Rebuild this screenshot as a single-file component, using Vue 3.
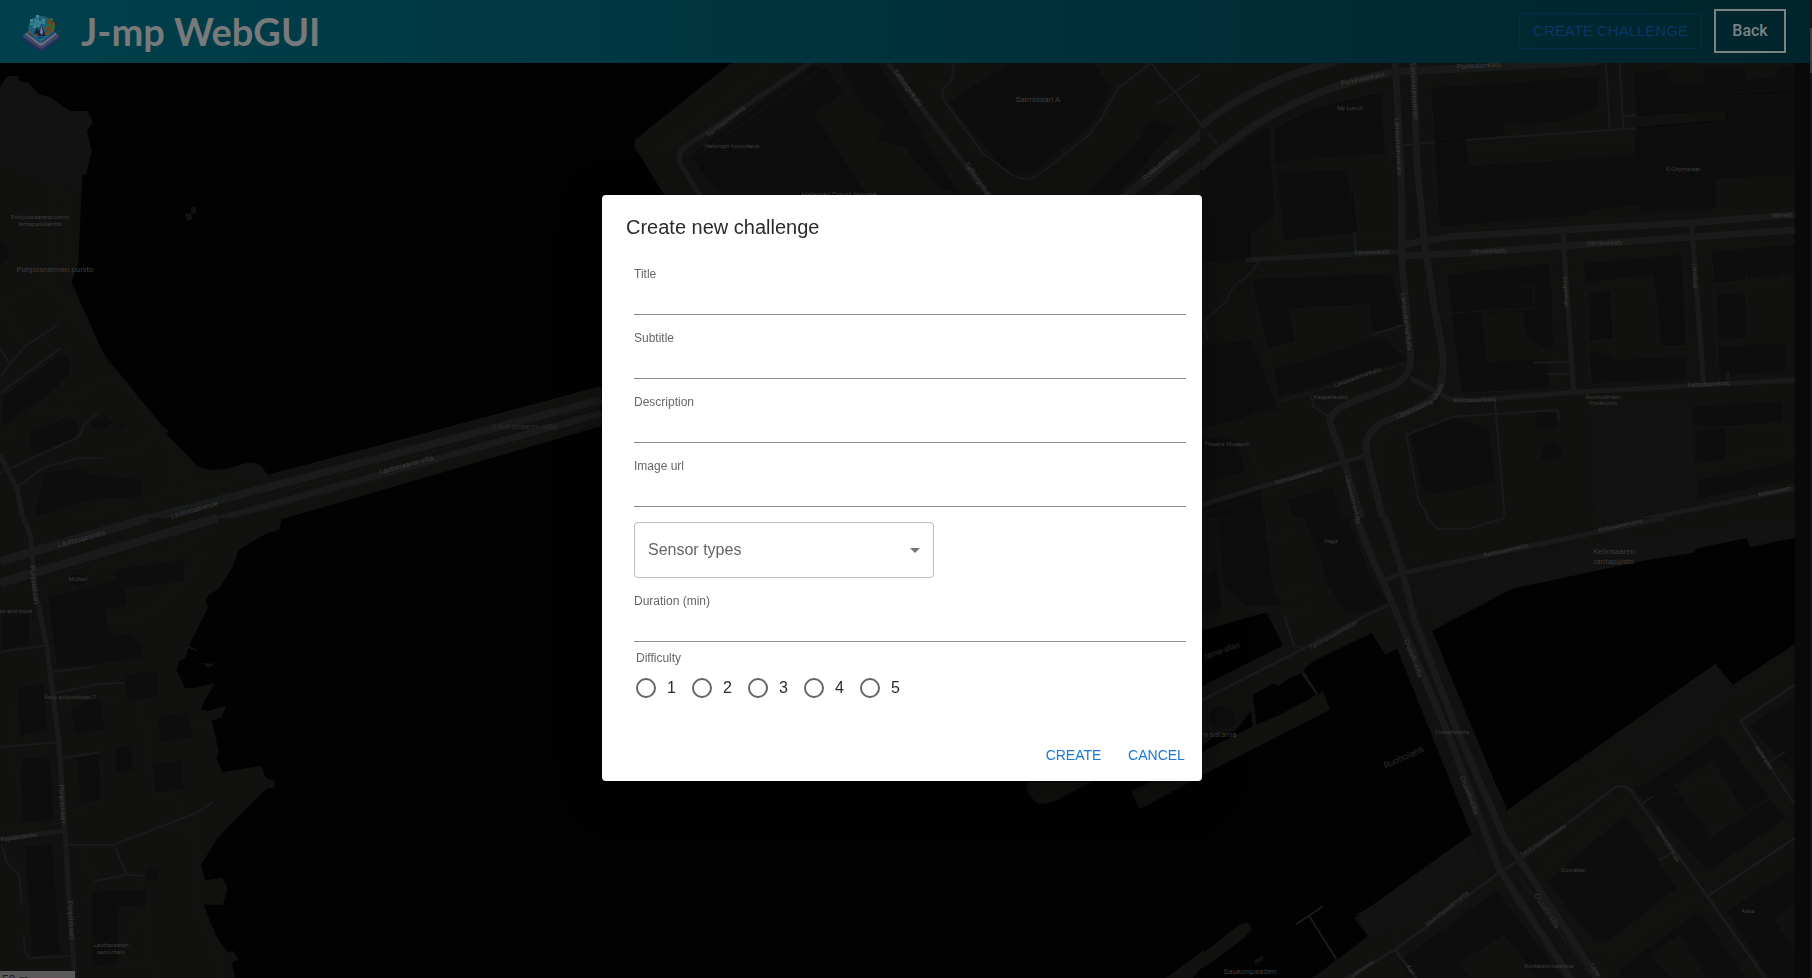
<script setup>
import { reactive } from 'vue'

const form = reactive({
  title: '',
  subtitle: '',
  description: '',
  image: '',
  sensor: '',
  duration: '',
  difficulty: null
})

const textFields = [
  { key: 'title', label: 'Title' },
  { key: 'subtitle', label: 'Subtitle' },
  { key: 'description', label: 'Description' },
  { key: 'image', label: 'Image url' }
]

// Map sections: origin and unit size of each one on the map canvas
const sections = {
  nw: [0, 60, 0.385],
  sw: [0, 518, 0.385],
  n: [600, 60, 0.385],
  ne: [1200, 60, 0.3903],
  se: [1200, 518, 0.3903]
}
const frame = (id) => {
  const [x, y, s] = sections[id]
  return `translate(${x} ${y}) scale(${s} 0.3333)`
}

const labels = [
  ['nw', 104, 477, 0, 'Pohjoiskaarenpuiston', 6],
  ['nw', 104, 499, 0, 'lemapallokenttä', 6],
  ['nw', 144, 636, 0, 'Pohjoisniemen puisto', 8],
  ['nw', 1364, 1108, 0, 'Lauttasaaren silta', 8, 'faint'],
  ['nw', 1058, 1220, -15, 'Lauttasaaren silta', 7],
  ['nw', 506, 1355, -16, 'Lauttasaarentie', 7],
  ['sw', 212, 70, -15, 'Lauttasaarentie', 7],
  ['sw', 84, 200, 84, 'Pohjoiskaari', 7],
  ['sw', 203, 190, 0, 'Mutteri', 6],
  ['sw', 40, 284, 0, 'aw and more', 6],
  ['sw', 183, 544, 0, 'Asoy pohjoiskaari 7', 6],
  ['sw', 156, 858, 87, 'Pohjoiskaari', 7],
  ['sw', 50, 963, -8, 'Pajalahdentie', 6],
  ['sw', 178, 1206, 87, 'Pohjoiskaari', 7],
  ['sw', 289, 1288, 0, 'Lauttasaaren', 6],
  ['sw', 289, 1309, 0, 'senioritalo', 6],
  ['n', 330, 190, -37, 'Salmisaarenranta', 6],
  ['n', 343, 264, 0, 'Helsingin hovioikeus', 6],
  ['n', 622, 410, 0, 'Helsinki Court House', 8],
  ['n', 795, 88, 54, 'Tallberginkatu', 7],
  ['n', 979, 366, 54, 'Tallberginkatu', 7],
  ['n', 1137, 126, 0, 'Salmisaari A', 8],
  ['n', 1460, 318, -41, 'Porkkalankatu', 7],
  ['ne', 418, 63, -13, 'Porkkalankatu', 7],
  ['ne', 715, 24, -3, 'Porkkalankatu', 7],
  ['ne', 385, 149, 0, 'My Lunch', 6],
  ['ne', 542, 96, 87, 'Länsisatamankatu', 7],
  ['ne', 502, 262, 87, 'Länsisatamankatu', 7],
  ['ne', 522, 786, 83, 'Länsisatamankatu', 7],
  ['ne', 1237, 332, 0, 'K-Citymarket', 6],
  ['ne', 440, 582, -2, 'Itämerenkatu', 6],
  ['ne', 740, 579, -2, 'Itämerenkatu', 6],
  ['ne', 1038, 555, -2, 'Itämerenkatu', 6],
  ['ne', 1490, 471, -2, 'Itämere', 6],
  ['ne', 932, 696, 87, 'Kaapelikuja', 6],
  ['ne', 1262, 648, 87, 'Laivakuja', 6],
  ['ne', 406, 958, -20, 'Länsisatamankatu', 6],
  ['ne', 335, 1016, 0, 'Kaapeliaukio', 6],
  ['ne', 550, 1052, -23, 'Länsisatama', 7],
  ['ne', 616, 1000, -62, 'nkatu', 7],
  ['ne', 705, 1026, -2, 'Kellosaarenkatu', 6],
  ['ne', 1304, 979, -3, 'Kellosaarenkatu', 6],
  ['ne', 1033, 1016, 0, 'Ruoholahden', 6],
  ['ne', 1033, 1036, 0, 'Pysäköinti', 6],
  ['ne', 68, 1158, 0, 'Theatre Museum', 6],
  ['ne', 253, 1254, -16, 'Tammasaarenkatu', 6],
  ['ne', 388, 1320, 76, 'Länsisatamankatu', 6],
  ['ne', 1474, 1300, -12, 'Kellosaarenr', 6],
  ['se', 336, 75, 0, 'Vega', 6],
  ['se', 785, 102, -13, 'Kellosaarenranta', 6],
  ['se', 1079, 26, -12, 'Kellosaarenranta', 6],
  ['se', 1061, 107, 0, 'Kellosaaren', 8],
  ['se', 1061, 137, 0, 'rantapuisto', 8],
  ['se', 343, 358, -29, 'Tammasaarenlaituri', 6],
  ['se', 60, 405, -20, 'tama-allas', 8, 'faint'],
  ['se', 50, 657, 0, 'n satama', 8],
  ['se', 540, 424, 69, 'Crusellinsilta', 7],
  ['se', 645, 648, 0, 'Crusellinsilta', 6],
  ['se', 526, 725, -24, 'Ruoholahti', 9, 'faint'],
  ['se', 683, 834, 69, 'Crusellinsilta', 7],
  ['se', 884, 1182, 57, 'Crusellinsilta', 7],
  ['se', 882, 972, -34, 'Saukonpaadenranta', 6],
  ['se', 636, 1176, -38, 'Saukonpaadenranta', 6],
  ['se', 418, 1358, -36, 'adenranta', 6],
  ['se', 536, 1360, 58, 'Karl', 6],
  ['se', 955, 1061, 0, 'Docrates', 6],
  ['se', 1194, 980, 58, 'Messitytönkuja', 6],
  ['se', 1440, 720, 57, 'Jaalaranta', 6],
  ['se', 1405, 1186, 0, 'Aava', 6],
  ['se', 893, 1351, 0, 'Kiinteistömaailma', 6],
  ['se', 1010, 1360, 60, 'Länsi', 6],
  ['se', 127, 1369, 0, 'Saukonpaaden', 8]
].map(([id, x, y, angle, text, size, tone]) => {
  const [ox, oy, s] = sections[id]
  const px = Math.round(ox + x * s)
  const py = Math.round(oy + y / 3)
  return { text, size, tone, px, py, turn: `rotate(${angle} ${px} ${py})` }
})
</script>

<template>
  <div class="page">
    <header class="topbar">
      <svg class="logo" viewBox="0 0 38 38" aria-hidden="true">
        <path d="M1 23 17 12h4l16 11v3L21 37q-2 1.500-4 0L1 26z" fill="#232f58" />
        <path d="M1 21 17 10h4l16 11v2L21 34q-2 1.500-4 0L1 23z" fill="#3d4668" />
        <path d="M3 20 17 10h4l14 10-14 11q-2 1.500-4 0z" fill="#696c7d" />
        <path d="M5 19 17 10h4l12 9-12 9q-2 1.200-4 0z" fill="#123b66" />
        <path d="M6 18Q6 2 19 2t13 16l-6 5H12z" fill="#19627a" />
        <path d="M8 9h4V5h5v2h6v3h-4v3h-7v-2H8z" fill="#35808f" />
        <path d="M14 1h3v3h-3zM8 5h3v3H8zM11 12h3v2h-3zM20 5h3v2h-3z" fill="#547f9a" />
        <path d="M25 5h5v3h3v7h-4v2h-5v-4h2V9h-1z" fill="#6b4522" />
        <path d="M28 4h3v3h-3zM25 10h4v3h-4zM30 12h3v3h-3z" fill="#34643a" />
        <path d="m12 20 3-7 2 4 2-7 5 12H13z" fill="#15234a" />
        <path d="m19 11 2 7-1 3-2-2z" fill="#7b8190" />
        <path d="M7 17h3v3H7zM12 20h4v2h-4zM23 18h5v3h-5zM28 15h4v3h-4z" fill="#6f4b20" />
        <path d="m10 22 4 1 4 2 5-2 4-1-8 6z" fill="#1d7087" />
      </svg>
      <h1>J-mp WebGUI</h1>
      <button type="button" class="outlined">CREATE CHALLENGE</button>
      <button type="button" class="back">Back</button>
    </header>

    <main class="map">
      <svg viewBox="0 63 1795 915" preserveAspectRatio="xMidYMid slice" aria-label="Map">
        <rect class="water" y="63" width="1795" height="915" />

        <g :transform="frame('nw')">
          <path class="park" d="M0 80 20 48H48V62L75 70 100 102 130 112 182 154 228 152 242 188 226 212 238 272 224 342 214 346 203 615 185 665 214 745 278 905 308 937 420 1095 436 1110 434 1124 510 1215Q540 1240 600 1224 660 1195 680 1220L704 1258V1380H0Z" />
          <path class="land" d="M0 300 120 370 210 380 203 615 185 665 278 905 308 937 434 1124 510 1215Q540 1240 600 1224L704 1258 732 1345V1380H0Z" />
          <path class="park" d="m480 464 15-6 6 18-14 8zM496 442l12-2 3 18-14 4z" />
          <path class="building" d="M10 1010 160 880 185 905 180 945 130 1000 40 1080 5 1090zM80 1120 180 1070 205 1100 190 1140 90 1180 75 1160zM115 1240 200 1225 240 1245 370 1260 368 1310 240 1318 90 1370zM0 545l20 15 5 35-25 25zM235 1085l40-20 20 20-40 30zM312 1085l14 12-10 10z" />
          <path class="trail" d="M0 205Q130 290 135 370L128 655 420 1125 520 1310M150 210Q165 280 158 320L135 370 183 415 178 590 160 610M0 735 128 655 178 750 150 795M0 750 35 790 62 860M0 1135 40 1115 35 1085 70 1045 145 1005 185 935 183 895 158 862M75 1045 165 1070 170 1028 280 950M170 1055 220 1085 205 1130M450 1205Q465 1255 450 1290M265 1195 350 1170 400 1122" />
          <path class="road s3" d="M0 950 30 905 65 860 150 795M0 1000 158 863M0 865 25 910M0 1240 205 1130 222 1088 254 1060M45 1280 115 1222 200 1195 266 1195" />
          <path class="road s7" d="M0 1185 45 1290 60 1380" />
          <path class="land" d="M700 1245 1562 978V1098L732 1378Z" />
          <path class="road s10" d="M380 1377 1562 1020" />
          <path class="road s9" d="M560 1380 1562 1060" />
          <path class="trail" d="M190 1375 540 1270 700 1245 1562 982M620 1370 1562 1085M540 1355 1562 1038" />
        </g>

        <g :transform="frame('sw')">
          <path class="land" d="M0 0H732L725 35 690 48 620 95 605 145 570 210 540 235 533 250 541 268 490 385 482 420 465 430 459 455 480 510 505 510 558 495 525 560 524 575 540 580 588 562 575 598 550 608 568 700 563 720 577 762 680 744 690 780 716 790 712 808 692 812 565 960 523 1040 533 1087 578 1080 591 1110 579 1160 529 1160 560 1250 592 1305 605 1298 620 1325 603 1332 610 1380H0Z" />
          <path class="park" d="m524 435 33 2-15 12zM490 383l25 12-5 4-23-10z" />
          <path class="building" d="M120 240 300 190V155L475 125 478 190 325 210V265L270 270 285 345 340 350 370 385V420L150 450zM325 470l82-10 5 75-80 15zM412 595l82-12 3 75-80 15zM397 738l73-10 6 85-74 12zM185 560l78-20 6 95-74 10zM200 720l58-10 8 130-56 15zM300 690l40-6 5 70-44 12zM45 510l68-12 10 140-70 15zM55 722l75-5 8 190-78 5zM65 985l70-5 20 325-70 10zM240 1120l140-5-2 45-70 5-3 170-65 10zM180 185q22-40 45 0-20 38-45 0zM5 295l70-5v90l-70 15zM380 1052h32v35h-32z" />
          <path class="trail" d="M180 155 300 130 420 118 550 35M140 190 300 128M300 160 305 130M280 315 390 285 420 250 500 165 525 110M165 580 235 540 320 545M355 550 365 618 405 615M375 620 402 825 455 830 465 905 505 975M485 585 500 612 530 620M190 885 265 845 258 702M500 890Q520 920 510 1010L500 1130 530 1230Q570 1300 572 1380M330 1070Q385 1100 385 1130L387 1270 400 1380M205 985 245 1090M200 1155 225 1150 245 1095M320 1330 400 1332M325 1290Q330 1220 380 1185M0 940 160 915M120 215 145 440M45 540 32 620 48 850" />
          <path class="road s12" d="M0 130 385 0" />
          <path class="road s11" d="M0 195 565 0" />
          <path class="road s7" d="M62 0 80 60 90 210 122 390 152 660 170 960 182 1200 195 1380" />
          <path class="road s3" d="M0 402 115 383M130 463 245 447M130 528 260 497 322 495M0 688 148 673M160 720 258 703M175 980 295 980 510 885 555 850M295 980 330 1070 375 1073M245 1090 330 1070M5 980 15 1030 50 1070 57 1160M62 1250Q60 1310 80 1320L190 1314" />
          <path class="road s6" d="M0 965 170 938" />
        </g>

        <g :transform="frame('n')">
          <path class="land" d="M345 5 90 240V262L175 420H1568V5Z" />
          <path class="building" d="M555 15 230 290 330 420H520L430 240 360 290 345 330 420 420H700L555 160 635 95 590 30ZM620 5 690 150 740 190 720 240 790 260 880 380 930 400 720 5ZM950 90 1080 5H1280L1330 90 1270 200 1120 340 1050 325 905 130ZM1290 370 1400 240 1430 180 1500 200 1400 330 1340 405H1270Z" />
          <path class="trail" d="M430 30 135 285 205 405M570 30 240 295 300 420M700 370 770 310 800 320 870 395M770 30 1010 400M860 60 1000 290" />
          <path class="road s6" d="M550 5 215 265Q200 290 210 315L262 410" />
          <path class="road s6" d="M745 5 1010 410" />
          <path class="road s3" d="M910 5Q930 40 905 70 880 90 895 125L995 280 1070 345Q1110 370 1140 345L1270 225 1300 180 1345 85 1430 10M1430 8 1560 190M1445 135 1568 35" />
          <path class="road s12" d="M1360 415 1568 215M1450 415 1568 310" />
        </g>

        <g :transform="frame('ne')">
          <rect class="land" width="1524" height="1383" />
          <path class="building" d="M190 205 300 140 465 95 472 280 195 305zM200 335l175-5 5 45 25 140-190 25zM590 85 1020 50V140L935 180 830 195 780 180V225L680 240 690 315 1115 280V205L1350 180V110L1524 95V345L1320 355V445L1130 455 1125 435 990 450V465L612 498zM1110 40 1200 30 1215 75 1290 70 1295 25H1395L1400 60 1480 50V20H1524V95L1350 105V145L1120 165z" />
          <path class="building" d="M130 660 490 640 520 790 440 820 430 735 230 748 245 845 175 865zM190 930 470 830 525 900 205 1010zM635 645 895 610 910 870 880 860 835 830 828 755 720 760 735 905 890 900 895 985 670 998zM985 610l250-25 8 270-65 5-15-215-175 20zM1000 700l50-5 8 140-58 5zM1000 870l60 30 185-10v65l-240 15zM1310 575l214-20v85l-210 30zM1325 705l70-5 5 135-70 5zM1330 860l170-10v85l-170 10zM0 330 120 240 175 200 190 470 130 520V600L0 605zM0 860 130 840 200 1050 0 1105z" />
          <path class="building" d="M540 1120 650 1070 740 1110 755 1265 600 1305 570 1290zM1265 1040l225-15v60l-225 20zM1270 1115l75-10v90l-75 15zM1275 1260l249-55v50l-245 60zM880 1150q30-20 45 10t-20 40-30-20zM1130 1110q20-20 40 0l-15 35-25-10zM5 1130l85 10 25 95-110 30zM20 1330l135-45 10 95H20zM225 1320l115-40 25 100H245zM865 1055l50 5-5 50-50-10z" />
          <path class="park" d="M1003 1035 1255 1015 1275 1330 1020 1370z" />
          <path class="trail" d="M185 205 290 140 480 90 500 470M185 205 195 500 215 545 500 520 1524 445M590 60 612 500M130 650 500 628 520 700M130 650 205 1040 5 1115M620 615 1524 545M620 620 665 1000 950 985M690 260 1110 235M230 748 430 735 440 820M230 748 245 845 175 870M630 760 860 745M810 680H855V745M690 315 1115 285M900 600 910 960M980 600 1000 980M990 685 1165 680 1180 860H1250M1055 690 1062 900M1240 570 1255 950M1310 570 1330 940M1320 670 1490 660 1500 630M1400 640 1405 835H1330M1000 845 1060 840M5 1360 320 1240M560 910 640 950 655 1000Q640 1060 600 1060L480 1110 450 1160 465 1230M1003 1035 1020 1370M1005 1135Q1150 1190 1180 1210 1250 1250 1270 1320M1255 1095Q1130 1230 1080 1360M1260 1100 1500 1105 1524 1180M1265 1225 1524 1160M1050 1380 1524 1270M105 1085 155 1260 330 1190M0 25 30 10 55 35 85 5" />
          <path class="road s10" d="M0 200Q150 60 350 5M0 325Q200 100 500 35L1020 5" />
          <path class="road s9" d="M500 5 515 330 517 600 540 890Q540 960 480 985L400 1020Q320 1060 335 1095L370 1210 415 1383" />
          <path class="road s9" d="M548 5 555 300 575 550 600 740 622 880Q628 970 600 1010 560 1050 480 1080 420 1115 425 1170L470 1383" />
          <path class="road s9" d="M517 555 640 530 1260 488 1524 464M510 588 700 578 930 558 1524 510" />
          <path class="road s6" d="M118 600 510 575M930 520 957 995M1260 490 1290 970M540 955 640 1018 710 1020 957 997 1524 960M5 1335 370 1205 430 1185M1130 1380 1524 1285" />
          <path class="road s3" d="M150 603Q130 650 100 665 70 700 70 720L20 775 10 790 20 840M440 825 520 795M515 255 605 247M680 240 1118 205M1040 10 1050 205M1075 10 1085 205M1085 170 1118 165M395 515 400 575M855 908 945 907M890 942 950 942M755 1020 780 1365 770 1383M285 1005 290 1040 330 1070M20 215 45 255M590 1383 560 1320 528 1125 650 1070 915 1050 920 1080M1353 935V965" />
          <path class="dash" d="M205 1025 525 910" />
          <path class="tunnel" d="M605 245 680 240M1118 165 1350 150V180L1118 203M1350 105 1524 95M390 400 398 515" />
        </g>

        <g :transform="frame('se')">
          <rect class="land" width="1524" height="1383" />
          <path class="building" d="M20 170 45 150 55 270 5 290V170zM50 5 165 0 185 200 205 260 120 265 60 200zM265 0 380 0 440 190 480 250 420 280 375 285 320 185 310 120zM890 1090 1090 890 1220 1110 1040 1275 1010 1270zM1140 800 1330 650 1500 900 1300 1060 1110 810zM1410 620 1524 540V760L1480 720zM510 1330 760 1120 930 1380H540zM1350 1180 1524 1050V1383H1460zM1080 1350 1280 1180 1400 1383H1070z" />
          <path class="land" d="m1215 800 100-75 80 160-80 70zM665 1335l115-80 80 125H690zM1470 1205l54-50v140zM1150 1310l80-60 70 133h-90z" />
          <path class="park" d="M565 185 830 115 1000 80 1524 0V60L1150 125 800 212 610 300zM1095 670 1270 490 1320 437 1365 520 1290 610 1140 740zM400 1190 690 955 720 1040 490 1230 430 1255z" />
          <path class="water" d="M0 340 170 283 213 382 0 508ZM440 345 475 410 505 392 695 948 395 1200 430 1255 285 1383H0V775L333 575 315 520 303 527 265 455 290 430ZM595 338 800 212 1150 125 1265 105 1270 92 1400 60 1410 88 1524 60V378L1365 500 1320 437 785 878ZM135 530 190 495 200 505 230 480 262 465 298 527 285 540 205 590 145 620ZM0 690 40 650 90 640 130 580 135 625 0 705Z" />
          <path class="building" d="M25 600q0-35 30-35t35 35-30 30-35-30z" />
          <path class="road s3" d="M262 465 298 525M245 1220 315 1165M280 1195 350 1325" />
          <path class="land" d="M-36 1383 -12 1325 100 1220Q130 1205 132 1235 120 1260 0 1355L-20 1383zM140 1325l22-12v14l-22 12z" />
          <path class="trail" d="M170 0V60L240 50M185 235 270 210M220 300 285 262M220 290 240 380 265 400M0 310 205 262M450 135 560 105 555 300 785 870M565 185 840 115 845 170M560 180 610 300 800 195M400 1190 480 1150 690 985 730 1060M785 890 1040 700 1290 520M790 880 820 930 1050 790 1090 780M1000 740 1075 690 1085 710 1010 765M1095 670 1250 540 1295 610 1140 740 1095 670M1260 490 1365 520 1524 410M1370 530 1524 440M1330 620 1510 905 1524 900M1290 1090 1510 920M840 1040 1010 1300 1290 1130M880 1050 1090 850 1180 1000M500 1240 760 1010M560 1250 755 1100M1320 720V770L1395 890 1490 820M1215 830 1320 770M1215 800 1310 955 1524 790M665 1335 780 1255 860 1375M490 1310 520 1260M610 1200 640 1250M1310 1165 1460 1383M1050 1310 1250 1150" />
          <path class="road s9" d="M400 0 430 90 470 195 525 345 640 660 765 1050 950 1383M475 0 520 165 550 310 660 640 780 960 850 1080 1020 1383" />
          <path class="road s6" d="M470 187 520 165 700 120 1190 0" />
          <path class="road s4" d="M0 550 250 400 430 290 485 260M370 1383 500 1295 765 1065 840 1010 1060 810Q1085 795 1105 820L1300 1135 1450 1383M500 1295 555 1383M1300 1135 1524 960M1524 500 1385 610 1524 860" />
          <path class="road s3" d="M580 0 610 32 690 32 780 0M1130 860 1160 835M1175 1028 1210 1005M215 290 240 380 270 395M1455 735 1500 700" />
          <path class="dash" d="M780 1100 940 1370M820 1080 1000 1370" />
        </g>

        <path class="land" d="M1027 782V790Q1033 802 1040 804 1052 804 1066 795L1092 782ZM1131 791 1140 809 1202 776V760ZM1166 978 1204 950V966L1190 978Z" />

        <g class="labels">
          <text
            v-for="(l, i) in labels"
            :key="i"
            :class="l.tone"
            :x="l.px"
            :y="l.py"
            :font-size="l.size"
            :transform="l.turn"
          >{{ l.text }}</text>
        </g>
      </svg>
      <div class="scale">50 m</div>
    </main>
    <div class="scroll"><span></span></div>
  </div>

  <div class="overlay">
    <form class="dialog" role="dialog" aria-labelledby="dialog-title" @submit.prevent>
      <h2 id="dialog-title">Create new challenge</h2>
      <div class="body">
        <div v-for="f in textFields" :key="f.key" class="field">
          <label :for="f.key">{{ f.label }}</label>
          <input :id="f.key" v-model="form[f.key]" type="text" />
        </div>
        <div class="select">
          <select v-model="form.sensor" aria-label="Sensor types">
            <option value="">Sensor types</option>
          </select>
          <svg viewBox="0 0 10 5" aria-hidden="true"><path d="M0 0h10L5 5z" /></svg>
        </div>
        <div class="field">
          <label for="duration">Duration (min)</label>
          <input id="duration" v-model="form.duration" type="text" />
        </div>
        <fieldset>
          <legend>Difficulty</legend>
          <div class="radios">
            <label v-for="n in 5" :key="n">
              <input v-model="form.difficulty" type="radio" name="difficulty" :value="n" />
              <span>{{ n }}</span>
            </label>
          </div>
        </fieldset>
      </div>
      <div class="actions">
        <button type="submit">CREATE</button>
        <button type="button">CANCEL</button>
      </div>
    </form>
  </div>
</template>

<style>
body {
  margin: 0;
  background: #08090b;
}
</style>

<style scoped>
.page,
.overlay {
  box-sizing: border-box;
  font-family: "Liberation Sans", Arial, sans-serif;
}
.page {
  height: 100vh;
  display: grid;
  grid-template: 63px minmax(0, 1fr) / minmax(0, 1fr) 2px;
  overflow: hidden;
}
.topbar {
  display: flex;
  align-items: center;
  gap: 12px;
  box-sizing: border-box;
  padding: 0 24px 2px 22px;
  background: linear-gradient(90deg, #00404c, #00242c);
}
.logo {
  width: 38px;
  height: 38px;
  margin-top: 4px;
}
.topbar h1 {
  margin: 0 auto 0 9px;
  font: 700 38px/60px Lato, sans-serif;
  color: #77797b;
}
.outlined {
  box-sizing: border-box;
  height: 36px;
  min-width: 183px;
  border: 1px solid #062c4b;
  border-radius: 4px;
  background: transparent;
  color: #093665;
  font: 15px "Liberation Sans", Arial, sans-serif;
}
.back {
  box-sizing: border-box;
  height: 44px;
  width: 72px;
  padding: 0;
  border: 2px solid #7b8282;
  background: transparent;
  color: #7d8283;
  font: 500 16px Roboto, sans-serif;
}
.map {
  position: relative;
  grid-row: 2;
  margin-right: 15px;
  overflow: hidden;
}
.map > svg {
  display: block;
  width: 100%;
  height: 100%;
}
.scale {
  position: absolute;
  left: 0;
  bottom: -9px;
  box-sizing: border-box;
  width: 75px;
  height: 16px;
  padding: 2px;
  background: #5b5959;
  color: #1c1c1c;
  font: 12px/14px "Liberation Sans", Arial, sans-serif;
}
.scroll {
  grid-row: 1 / 3;
  grid-column: 2;
  background: #161616;
}
.scroll span {
  display: block;
  height: 45px;
  margin-top: 28px;
  background: #3c3c3c;
}
.water {
  fill: #020202;
}
.land {
  fill: #11110f;
}
.park {
  fill: #111211;
}
.building {
  fill: #0d0d0d;
}
.road,
.trail,
.dash,
.tunnel {
  fill: none;
  stroke: #191a1a;
  vector-effect: non-scaling-stroke;
}
.trail {
  stroke: #151514;
  stroke-width: 1px;
}
.dash {
  stroke-width: 2px;
  stroke-dasharray: 2 1;
}
.tunnel {
  stroke: #090909;
  stroke-width: 1px;
}
.s3 {
  stroke-width: 2px;
}
.s4 {
  stroke-width: 3px;
}
.s6,
.s7 {
  stroke-width: 5px;
}
.s9 {
  stroke-width: 7px;
}
.s10 {
  stroke-width: 8px;
}
.s11,
.s12 {
  stroke-width: 9px;
}
.labels text {
  font-family: Roboto, sans-serif;
  text-anchor: middle;
  fill: #3c3c3c;
}
.labels .faint {
  fill: #2a2a2a;
}
.overlay {
  position: fixed;
  inset: 0;
  display: flex;
  align-items: center;
  justify-content: center;
  padding: 0 8px 2px 0;
}
.dialog {
  width: 600px;
  max-width: calc(100% - 64px);
  border-radius: 4px;
  background: #fff;
  color: #2b2b2b;
  box-shadow: 0 11px 15px -7px rgba(0, 0, 0, 0.2), 0 24px 38px 3px rgba(0, 0, 0, 0.14),
    0 9px 46px 8px rgba(0, 0, 0, 0.12);
}
.dialog h2 {
  margin: 0;
  padding: 16px 24px;
  font-size: 20px;
  line-height: 32px;
  font-weight: 400;
}
.body {
  padding: 0 16px 0 32px;
}
.field {
  padding: 8px 0;
}
.field label {
  display: block;
  color: #666;
  font-size: 12px;
  line-height: 14px;
}
.field input {
  display: block;
  box-sizing: border-box;
  width: 100%;
  height: 34px;
  padding: 4px 0;
  border: 0;
  border-bottom: 1px solid #8f8f8f;
  border-radius: 0;
  background: transparent;
  font: 16px "Liberation Sans", Arial, sans-serif;
  outline: none;
}
.select {
  position: relative;
  width: 300px;
  margin: 7px 0 8px;
}
.select select {
  display: block;
  box-sizing: border-box;
  width: 100%;
  height: 56px;
  padding: 0 32px 2px 13px;
  border: 1px solid #bdbdbd;
  border-radius: 4px;
  appearance: none;
  background: #fff;
  color: #666;
  font: 16px "Liberation Sans", Arial, sans-serif;
}
.select svg {
  position: absolute;
  top: 26px;
  right: 14px;
  width: 10px;
  height: 5px;
  fill: #757575;
  pointer-events: none;
}
fieldset {
  margin: 0;
  padding: 0 0 0 2px;
  border: 0;
}
legend {
  padding: 0;
  color: #666;
  font-size: 12px;
  line-height: 16px;
}
.radios {
  display: flex;
  gap: 16px;
  padding: 12px 0 31px;
}
.radios label {
  display: flex;
  align-items: center;
  width: 40px;
  gap: 11px;
  font-size: 16px;
  line-height: 20px;
}
.radios input {
  flex: none;
  width: 20px;
  height: 20px;
  margin: 0;
  border: 2px solid #666;
  border-radius: 50%;
  appearance: none;
}
.radios input:checked {
  background: radial-gradient(#1976d2 5px, transparent 6px);
}
.actions {
  display: flex;
  justify-content: flex-end;
  gap: 8px;
  padding: 8px;
}
.actions button {
  height: 36px;
  min-width: 75px;
  padding: 0 8px;
  border: 0;
  border-radius: 4px;
  background: transparent;
  color: #1976d2;
  font: 14px "Liberation Sans", Arial, sans-serif;
}
</style>
